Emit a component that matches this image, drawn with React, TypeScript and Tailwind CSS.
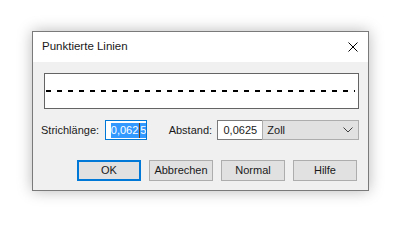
import React from 'react';

function Dialog() {
  return (
    <div
      className="flex flex-col w-[337px] h-[160px] border border-[#7a7a7a] bg-[#f0f0f0] shadow-[0_0_14px_rgba(0,0,0,0.28)]"
      style={{ fontFamily: '"Liberation Sans", Arial, sans-serif' }}
    >
      {/* title bar */}
      <div className="flex items-center justify-between h-[30px] bg-white pl-[9px] pr-[10px]">
        <span className="text-[11.5px] text-[#1a1a1a]">Punktierte Linien</span>
        <svg width="10" height="10" viewBox="0 0 10 10">
          <path d="M0.5 0.5 L9.5 9.5 M9.5 0.5 L0.5 9.5" stroke="#000" strokeWidth="1" />
        </svg>
      </div>

      <div className="flex flex-col pl-[11px] pr-[9px] pt-[11px]">
        {/* preview */}
        <div className="flex items-center h-[36px] border border-[#646464] bg-white">
          <svg width="312" height="4" viewBox="0 0 312 4">
            <line x1="1" y1="2" x2="310" y2="2" stroke="#000" strokeWidth="2" strokeDasharray="5 6" />
          </svg>
        </div>

        {/* inputs row */}
        <div className="flex items-center mt-[11px] h-[20px] text-[11px] text-[#1a1a1a]">
          <span className="ml-[-3px] w-[64px] whitespace-nowrap">Strichlänge:</span>
          <div className="flex items-center w-[42px] h-[20px] border border-[#0078d7] bg-white overflow-hidden pl-[5px]">
            <span className="bg-[#3399ff] text-white leading-[15px] whitespace-nowrap pr-[1px]">0,062</span>
            <span className="w-[1px] h-[15px] bg-[#6b3a10] shrink-0" />
            <span className="bg-[#3399ff] text-white leading-[15px] whitespace-nowrap">5</span>
          </div>
          <span className="ml-[22px] w-[49px] whitespace-nowrap">Abstand:</span>
          <div className="flex items-center w-[47px] h-[20px] border border-[#7a7a7a] bg-white pl-[5px] overflow-hidden whitespace-nowrap">
            0,0625
          </div>
          <div className="flex items-center justify-between ml-[-2px] w-[97px] h-[20px] border border-[#adadad] bg-[#e1e1e1] pl-[4px] pr-[5px]">
            <span>Zoll</span>
            <svg width="10" height="6" viewBox="0 0 10 6">
              <path d="M0.5 0.5 L5 5 L9.5 0.5" fill="none" stroke="#404040" strokeWidth="1" />
            </svg>
          </div>
        </div>

        {/* buttons */}
        <div className="flex justify-end gap-[8px] mt-[20px] pr-[2px] text-[11px] text-[#1a1a1a]">
          <button className="w-[64px] h-[21px] border-2 border-[#0078d7] bg-[#e1e1e1]">OK</button>
          <button className="w-[64px] h-[21px] border border-[#adadad] bg-[#e1e1e1]">Abbrechen</button>
          <button className="w-[64px] h-[21px] border border-[#adadad] bg-[#e1e1e1]">Normal</button>
          <button className="w-[64px] h-[21px] border border-[#adadad] bg-[#e1e1e1]">Hilfe</button>
        </div>
      </div>
    </div>
  );
}

export default function App() {
  return (
    <div className="w-[419px] h-[247px] bg-white pl-[32px] pt-[31px]">
      <Dialog />
    </div>
  );
}
